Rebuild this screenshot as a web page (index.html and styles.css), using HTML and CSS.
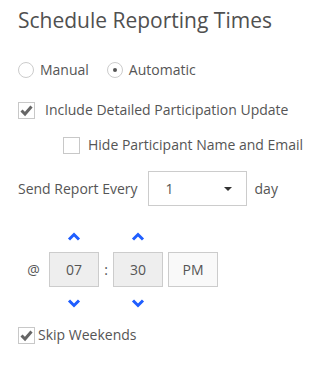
FILE: index.html
```html
<!DOCTYPE html>
<html lang="en">
<head>
    <meta charset="UTF-8">
    <meta name="viewport" content="width=device-width, initial-scale=1.0">
    <title>Schedule Reporting Times</title>
    <link rel="stylesheet" href="styles.css">
</head>
<body>
    <div class="panel">
        <h2 class="title">Schedule Reporting Times</h2>

        <div class="radios">
            <label class="radio"><span class="dot"></span>Manual</label>
            <label class="radio checked"><span class="dot"></span>Automatic</label>
        </div>

        <label class="check detail">
            <span class="box">
                <svg viewBox="0 0 17 17" width="17" height="17"><path d="M3.5 8.5 L7 12 L13.5 4.5" fill="none" stroke="#666" stroke-width="3"/></svg>
            </span>
            Include Detailed Participation Update
        </label>

        <label class="check hide">
            <span class="box"></span>
            Hide Participant Name and Email
        </label>

        <div class="send">
            <span>Send Report Every</span>
            <div class="select">
                <span>1</span>
                <span class="caret"></span>
            </div>
            <span>day</span>
        </div>

        <div class="time">
            <div class="cell at"></div>
            <div class="cell"><svg class="chev" viewBox="0 0 14 9" width="14" height="9"><path d="M2 7.5 L7 2.5 L12 7.5" fill="none" stroke="#1f5eff" stroke-width="3"/></svg></div>
            <div class="cell sep"></div>
            <div class="cell"><svg class="chev" viewBox="0 0 14 9" width="14" height="9"><path d="M2 7.5 L7 2.5 L12 7.5" fill="none" stroke="#1f5eff" stroke-width="3"/></svg></div>
            <div class="cell"></div>

            <div class="cell at">@</div>
            <div class="field fixed">07</div>
            <div class="cell sep">:</div>
            <div class="field fixed">30</div>
            <div class="field ampm">PM</div>

            <div class="cell at"></div>
            <div class="cell"><svg class="chev" viewBox="0 0 14 9" width="14" height="9"><path d="M2 1.5 L7 6.5 L12 1.5" fill="none" stroke="#1f5eff" stroke-width="3"/></svg></div>
            <div class="cell sep"></div>
            <div class="cell"><svg class="chev" viewBox="0 0 14 9" width="14" height="9"><path d="M2 1.5 L7 6.5 L12 1.5" fill="none" stroke="#1f5eff" stroke-width="3"/></svg></div>
            <div class="cell"></div>
        </div>

        <label class="check skip">
            <span class="box">
                <svg viewBox="0 0 17 17" width="17" height="17"><path d="M3.5 8.5 L7 12 L13.5 4.5" fill="none" stroke="#666" stroke-width="3"/></svg>
            </span>
            Skip Weekends
        </label>
    </div>
</body>
</html>
```

FILE: styles.css
```css
* {
    margin: 0;
    padding: 0;
    box-sizing: border-box;
}

body {
    margin: 0;
    background-color: #fff;
    color: #555;
    font-family: "Open Sans", "Liberation Sans", sans-serif;
    font-size: 14px;
    line-height: 20px;
}

.panel {
    padding: 6px 0 0 18px;
}

.title {
    font-size: 21px;
    font-weight: normal;
    line-height: 28px;
    color: #505050;
}

.radios {
    display: flex;
    gap: 18px;
    margin-top: 26px;
}

.radio {
    display: flex;
    align-items: center;
    gap: 6px;
}

.radio .dot {
    width: 16px;
    height: 16px;
    border: 1px solid #ccc;
    border-radius: 50%;
    display: flex;
    align-items: center;
    justify-content: center;
}

.radio.checked .dot::after {
    content: "";
    width: 4px;
    height: 4px;
    border-radius: 50%;
    background-color: #555;
}

.check {
    display: flex;
    align-items: center;
    gap: 10px;
}

.check .box {
    width: 17px;
    height: 17px;
    border: 1px solid #c8c8c8;
    background-color: #fff;
    display: flex;
    align-items: center;
    justify-content: center;
    flex-shrink: 0;
}

.check .box svg {
    display: block;
    margin: -1px;
}

.detail {
    margin-top: 20px;
}

.hide {
    margin-top: 15px;
    padding-left: 45px;
    gap: 8px;
}

.skip {
    margin-top: 12px;
    gap: 3px;
}

.send {
    display: flex;
    align-items: center;
    margin-top: 16px;
}

.select {
    width: 99px;
    height: 35px;
    border: 1px solid #ccc;
    margin: 0 8px 0 10px;
    display: flex;
    align-items: center;
    justify-content: space-between;
    padding: 0 14px 0 17px;
}

.caret {
    width: 0;
    height: 0;
    border-left: 4px solid transparent;
    border-right: 4px solid transparent;
    border-top: 4px solid #333;
}

.time {
    display: grid;
    grid-template-columns: 31px 50px 14px 50px 55px;
    grid-template-rows: 20px 35px 20px;
    row-gap: 6px;
    column-gap: 0;
    margin-top: 20px;
}

.cell {
    display: flex;
    align-items: center;
    justify-content: center;
}

.field {
    border: 1px solid #ccc;
    display: flex;
    align-items: center;
    justify-content: center;
}

.fixed {
    background-color: #eee;
}

.ampm {
    background-color: #f9f9f9;
    margin-left: 5px;
}

.chev {
    display: block;
}
```
